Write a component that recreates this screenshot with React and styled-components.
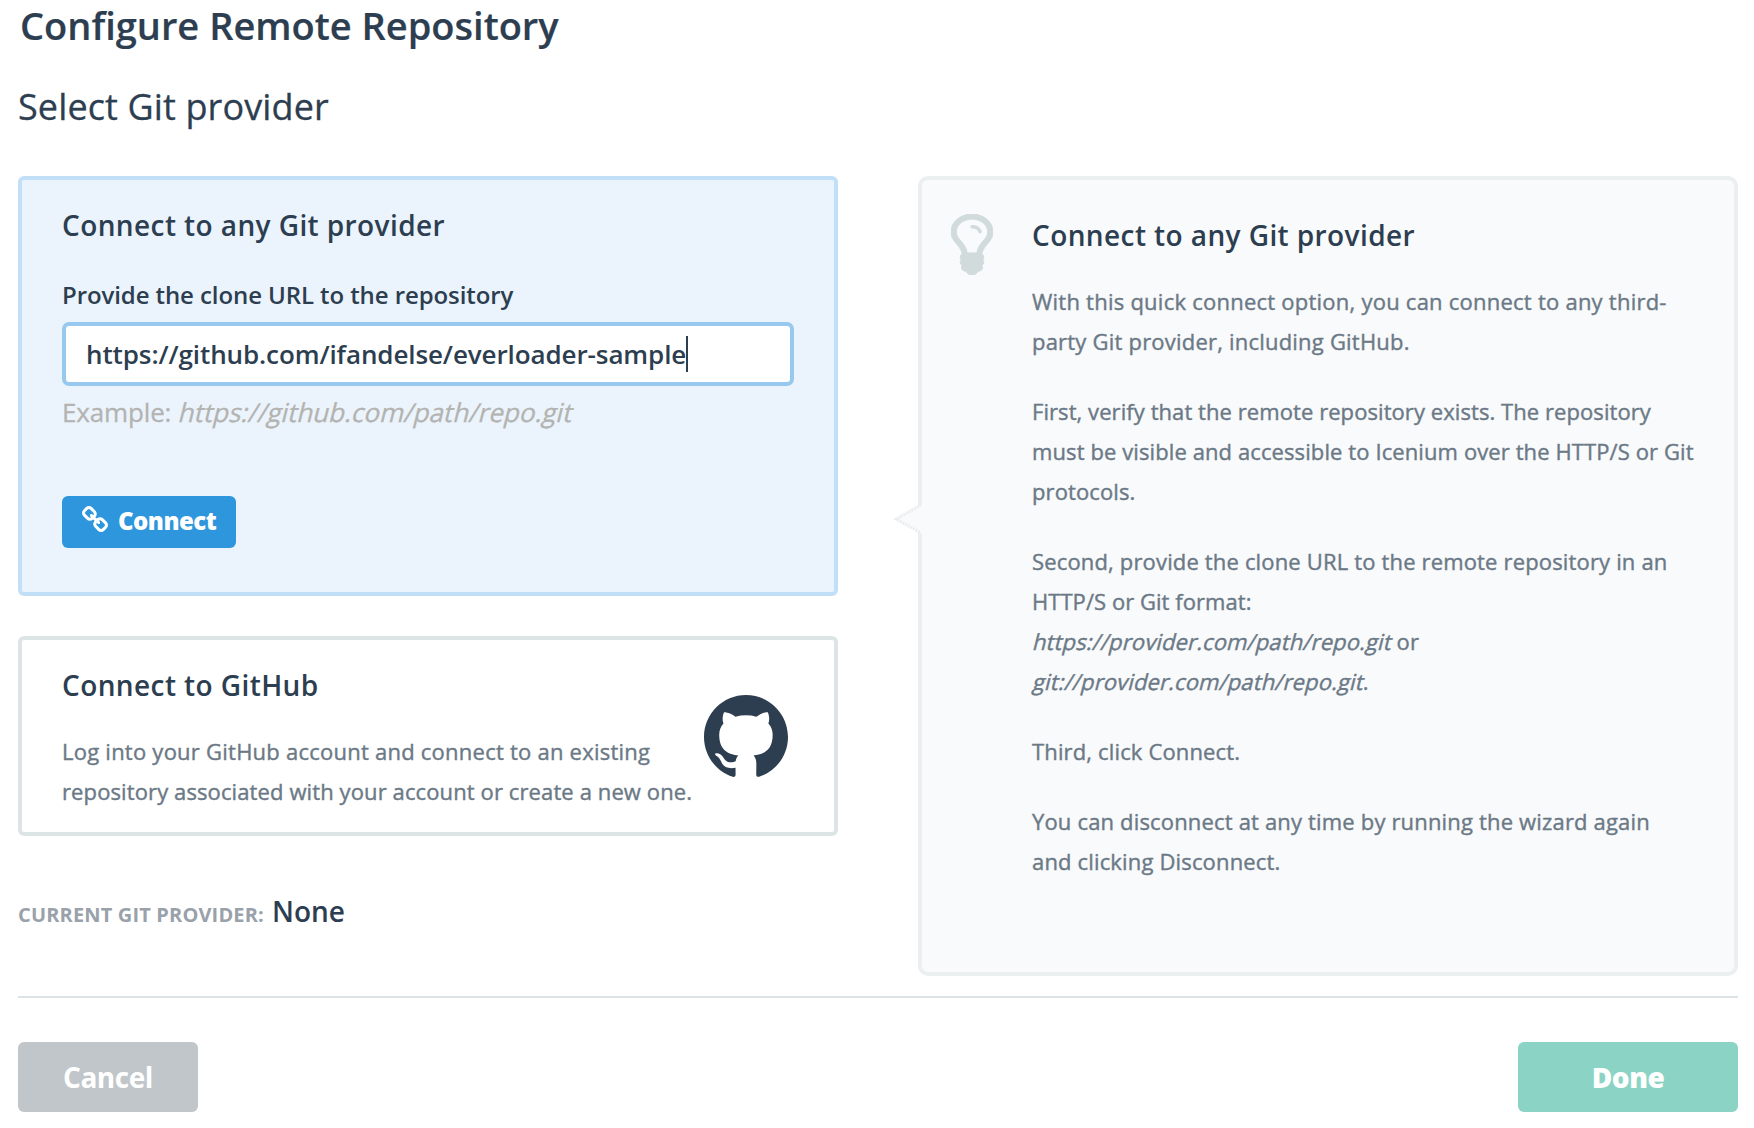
import React from 'react';
import styled, { createGlobalStyle } from 'styled-components';

const GlobalStyle = createGlobalStyle`
  * {
    box-sizing: border-box;
  }

  body {
    margin: 0;
    background: #fff;
    color: #2c3e50;
    font-family: 'Open Sans', sans-serif;
    -webkit-font-smoothing: antialiased;
  }
`;

const Page = styled.div`
  width: 1754px;
  height: 1128px;
  padding: 0 16px 0 18px;
  overflow: hidden;
`;

const Title = styled.h1`
  margin: 0;
  padding-left: 2px;
  font-size: 38px;
  font-weight: 600;
  line-height: 51px;
  -webkit-text-stroke: 0.2px;
`;

const Subtitle = styled.h2`
  margin: 31px 0 44px;
  font-size: 36px;
  font-weight: 400;
  line-height: 50px;
  letter-spacing: 0.12px;
  -webkit-text-stroke: 0.3px;
`;

const Columns = styled.div`
  display: grid;
  grid-template-columns: 820px 820px;
  justify-content: space-between;
  height: 800px;
`;

const Card = styled.section`
  height: ${props => (props.$active ? '420px' : '200px')};
  padding: 25px 40px 0;
  border: 4px solid ${props => (props.$active ? '#c1dff6' : '#dce4e5')};
  border-radius: 6px;
  background: ${props => (props.$active ? '#ebf4fc' : '#fff')};

  & + & {
    margin-top: 40px;
  }
`;

const Heading = styled.h3`
  margin: 0;
  font-size: 28px;
  font-weight: 600;
  line-height: 40px;
  letter-spacing: 0.41px;
`;

const Label = styled.label`
  display: block;
  margin: 34px 0 11px;
  font-size: 24px;
  font-weight: 600;
  line-height: 32px;
  letter-spacing: -0.09px;
`;

const UrlField = styled.div`
  display: flex;
  align-items: center;
  width: 732px;
  height: 64px;
  padding-left: 20px;
  border: 4px solid #97c9ef;
  border-radius: 7px;
  background: #fff;
  font-size: 26px;
  font-weight: 600;
  letter-spacing: -0.1px;
  white-space: nowrap;
`;

const Caret = styled.span`
  width: 2px;
  height: 36px;
  background: #2c3e50;
`;

const Example = styled.p`
  margin: 8px 0 66px;
  color: #b3b3b1;
  font-size: 26px;
  line-height: 36px;
  letter-spacing: -0.15px;
  -webkit-text-stroke: 0.3px;
`;

// slanted roman letters instead of the italic face
const Oblique = styled.span`
  display: inline-block;
  transform: skewX(-14deg);
  transform-origin: 0 70%;
  letter-spacing: ${props => props.$spacing || 0}px;
`;

const ConnectButton = styled.button`
  display: flex;
  align-items: flex-start;
  width: 174px;
  height: 52px;
  padding: 10px 0 0 20px;
  border: none;
  border-radius: 6px;
  background: #2d96dd;
  color: #fff;
  font-family: inherit;
  font-size: 24px;
  font-weight: 800;
  line-height: 30px;
  letter-spacing: -0.5px;
`;

const LinkIcon = styled.svg`
  width: 26px;
  height: 26px;
  margin-right: 10px;
  fill: #fff;
`;

const GithubBody = styled.div`
  display: flex;
  justify-content: space-between;
`;

const Text = styled.p`
  margin: ${props => (props.$first ? '26px' : '30px')} 0 0;
  color: #6b7986;
  font-size: 22px;
  line-height: 40px;
  white-space: nowrap;
  -webkit-text-stroke: 0.4px;
`;

const Line = styled.span`
  display: block;
  letter-spacing: ${props => props.$spacing || 0.11}px;
`;

const GithubLogo = styled.svg`
  flex: none;
  width: 84px;
  height: 84px;
  margin: -10px 6px 0 0;
  fill: #2c3e50;
`;

const Current = styled.p`
  margin: 55px 0 0;
  font-size: 28px;
  font-weight: 600;
  line-height: 40px;
`;

const CurrentLabel = styled.span`
  margin-right: 8px;
  color: #99a1aa;
  font-size: 20px;
  font-weight: 700;
  letter-spacing: 0.16px;
`;

const Help = styled.aside`
  position: relative;
  display: flex;
  align-items: flex-start;
  padding: 34px 0 0 29px;
  border: 4px solid #ebeff0;
  border-radius: 10px;
  background: #f9fafc;
`;

const HelpArrow = styled.svg`
  position: absolute;
  top: 323px;
  left: -28px;
  width: 28px;
  height: 32px;
`;

const BulbIcon = styled.svg`
  flex: none;
  width: 42px;
  height: 61px;
  margin-right: 39px;
  fill: #d1dbdb;
  stroke: #d1dbdb;
  stroke-width: 24px;
`;

const HelpContent = styled.div`
  padding-top: 1px;
`;

const Footer = styled.footer`
  display: flex;
  justify-content: space-between;
  margin-top: 20px;
  padding-top: 44px;
  border-top: 2px solid #dce3e6;
`;

const FooterButton = styled.button`
  width: ${props => (props.$primary ? '220px' : '180px')};
  height: 70px;
  padding: 0 0 1px;
  border: none;
  border-radius: 6px;
  background: ${props => (props.$primary ? '#8bd3c4' : '#c0c6ca')};
  color: #fff;
  font-family: inherit;
  font-size: 28px;
  font-weight: ${props => (props.$primary ? 800 : 700)};
  letter-spacing: -0.45px;
`;

const ProviderHelp = () => (
  <Help>
    <HelpArrow viewBox="0 0 28 32">
      <path d="M28 1 2 16 28 31z" fill="#f9fafc" />
      <path
        d="M27 2 2 16 27 30"
        fill="none"
        stroke="#e9edee"
        strokeWidth="3"
        strokeDasharray="2 1"
      />
    </HelpArrow>
    <BulbIcon viewBox="384 128 1024 1536" preserveAspectRatio="none">
      <path d="M1120 576q0 13-9.5 22.5t-22.5 9.5-22.5-9.5-9.5-22.5q0-46-54-71t-106-25q-13 0-22.5-9.5t-9.5-22.5 9.5-22.5 22.5-9.5q50 0 99.5 16t87 54 37.5 90zm160 0q0-72-34.5-134t-90-101.5-123-62-136.5-22.5-136.5 22.5-123 62-90 101.5-34.5 134q0 101 68 180 10 11 30.5 33t30.5 33q128 153 141 298h228q13-145 141-298 10-11 30.5-33t30.5-33q68-79 68-180zm128 0q0 155-103 268-45 49-74.5 87t-59.5 95.5-34 107.5q47 28 47 82 0 37-25 64 25 27 25 64 0 52-45 81 13 23 13 47 0 46-31.5 71t-77.5 25q-20 44-60 70t-87 26-87-26-60-70q-46 0-77.5-25t-31.5-71q0-24 13-47-45-29-45-81 0-37 25-64-25-27-25-64 0-54 47-82-4-50-34-107.5t-59.5-95.5-74.5-87q-103-113-103-268 0-99 44.5-184.5t117-142 164-89 186.5-32.5 186.5 32.5 164 89 117 142 44.5 184.5z" />
      <path d="M690 1110h412v370q-90 130-206 130t-206-130z" />
    </BulbIcon>
    <HelpContent>
      <Heading>Connect to any Git provider</Heading>
      <Text $first>
        <Line $spacing={0.24}>
          With this quick connect option, you can connect to any third-
        </Line>
        <Line $spacing={0.21}>party Git provider, including GitHub.</Line>
      </Text>
      <Text>
        <Line $spacing={0.07}>
          First, verify that the remote repository exists. The repository
        </Line>
        <Line $spacing={0.1}>
          must be visible and accessible to Icenium over the HTTP/S or Git
        </Line>
        <Line>protocols.</Line>
      </Text>
      <Text>
        <Line $spacing={0.16}>
          Second, provide the clone URL to the remote repository in an
        </Line>
        <Line $spacing={0.05}>HTTP/S or Git format:</Line>
        <Line>
          <Oblique $spacing={0.13}>https://provider.com/path/repo.git</Oblique>{' '}
          or
        </Line>
        <Line>
          <Oblique $spacing={0.13}>git://provider.com/path/repo.git</Oblique>.
        </Line>
      </Text>
      <Text>
        <Line $spacing={0.15}>Third, click Connect.</Line>
      </Text>
      <Text>
        <Line $spacing={0.17}>
          You can disconnect at any time by running the wizard again
        </Line>
        <Line $spacing={0.16}>and clicking Disconnect.</Line>
      </Text>
    </HelpContent>
  </Help>
);

const App = () => (
  <>
    <GlobalStyle />
    <Page>
      <Title>Configure Remote Repository</Title>
      <Subtitle>Select Git provider</Subtitle>
      <Columns>
        <div>
          <Card $active>
            <Heading>Connect to any Git provider</Heading>
            <Label>Provide the clone URL to the repository</Label>
            <UrlField>
              <span>https://github.com/ifandelse/everloader-sample</span>
              <Caret />
            </UrlField>
            <Example>
              Example: <Oblique>https://github.com/path/repo.git</Oblique>
            </Example>
            <ConnectButton type="button">
              <LinkIcon viewBox="16 16 1632 1632">
                <path d="M1456 1216q0-40-28-68l-208-208q-28-28-68-28-42 0-72 32 3 3 19 18.5t21.5 21.5 15 19 13 25.5 3.5 27.5q0 40-28 68t-68 28q-15 0-27.5-3.5t-25.5-13-19-15-21.5-21.5-18.5-19q-33 31-33 73 0 40 28 68l206 207q27 27 68 27 40 0 68-26l147-146q28-28 28-67zm-703-705q0-40-28-68l-206-207q-28-28-68-28-39 0-68 27l-147 146q-28 28-28 67 0 40 28 68l208 208q27 27 68 27 42 0 72-31-3-3-19-18.5t-21.5-21.5-15-19-13-25.5-3.5-27.5q0-40 28-68t68-28q15 0 27.5 3.5t25.5 13 19 15 21.5 21.5 18.5 19q33-31 33-73zm895 705q0 120-85 203l-147 146q-83 83-203 83-121 0-204-85l-206-207q-83-83-83-203 0-123 88-209l-88-88q-86 88-208 88-120 0-204-84l-208-208q-84-84-84-204t85-203l147-146q83-83 203-83 121 0 204 85l206 207q83 83 83 203 0 123-88 209l88 88q86-88 208-88 120 0 204 84l208 208q84 84 84 204z" />
              </LinkIcon>
              Connect
            </ConnectButton>
          </Card>
          <Card>
            <Heading>Connect to GitHub</Heading>
            <GithubBody>
              <Text $first>
                <Line $spacing={0.24}>
                  Log into your GitHub account and connect to an existing
                </Line>
                <Line>
                  repository associated with your account or create a new one.
                </Line>
              </Text>
              <GithubLogo viewBox="0 0.297 24 24">
                <path d="M12 .297c-6.63 0-12 5.373-12 12 0 5.303 3.438 9.8 8.205 11.385.6.113.82-.258.82-.577 0-.285-.01-1.04-.015-2.04-3.338.724-4.042-1.61-4.042-1.61C4.422 18.07 3.633 17.7 3.633 17.7c-1.087-.744.084-.729.084-.729 1.205.084 1.838 1.236 1.838 1.236 1.07 1.835 2.809 1.305 3.495.998.108-.776.417-1.305.76-1.605-2.665-.3-5.466-1.332-5.466-5.93 0-1.31.465-2.38 1.235-3.22-.135-.303-.54-1.523.105-3.176 0 0 1.005-.322 3.3 1.23.96-.267 1.98-.399 3-.405 1.02.006 2.04.138 3 .405 2.28-1.552 3.285-1.23 3.285-1.23.645 1.653.24 2.873.12 3.176.765.84 1.23 1.91 1.23 3.22 0 4.61-2.805 5.625-5.475 5.92.42.36.81 1.096.81 2.22 0 1.606-.015 2.896-.015 3.286 0 .315.21.69.825.57C20.565 22.092 24 17.592 24 12.297c0-6.627-5.373-12-12-12" />
              </GithubLogo>
            </GithubBody>
          </Card>
          <Current>
            <CurrentLabel>CURRENT GIT PROVIDER:</CurrentLabel>
            None
          </Current>
        </div>
        <ProviderHelp />
      </Columns>
      <Footer>
        <FooterButton type="button">Cancel</FooterButton>
        <FooterButton type="button" $primary>
          Done
        </FooterButton>
      </Footer>
    </Page>
  </>
);

export default App;
